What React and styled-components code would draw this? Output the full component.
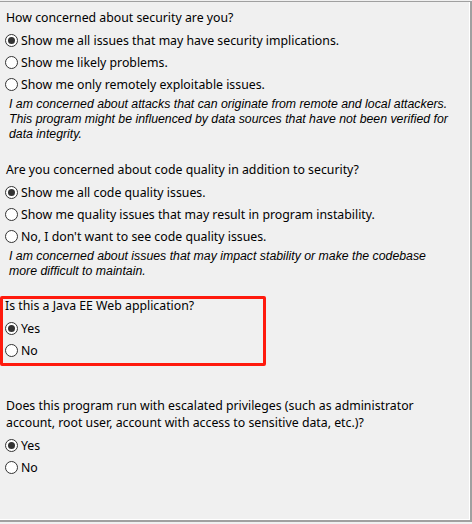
import React from 'react'
import styled, { createGlobalStyle } from 'styled-components'

const sections = [
  {
    question: 'How concerned about security are you?',
    options: [
      'Show me all issues that may have security implications.',
      'Show me likely problems.',
      'Show me only remotely exploitable issues.',
    ],
    note: 'I am concerned about attacks that can originate from remote and local attackers. This program might be influenced by data sources that have not been verified for data integrity.',
  },
  {
    question: 'Are you concerned about code quality in addition to security?',
    options: [
      'Show me all code quality issues.',
      'Show me quality issues that may result in program instability.',
      "No, I don't want to see code quality issues.",
    ],
    note: 'I am concerned about issues that may impact stability or make the codebase more difficult to maintain.',
  },
]

const Radio = ({ checked, label }) => (
  <Option>
    <Circle checked={checked} />
    <span>{label}</span>
  </Option>
)

const App = () => {
  return (
    <Panel>
      {sections.map((s, i) => (
        <Section key={i}>
          <Question>{s.question}</Question>
          {s.options.map((o, j) => (
            <Radio key={j} checked={j === 0} label={o} />
          ))}
          <Note>{s.note}</Note>
        </Section>
      ))}

      <Highlight>
        <Question tight>Is this a Java EE Web application?</Question>
        <Radio checked label="Yes" />
        <Radio label="No" />
      </Highlight>

      <Section>
        <Question wrap>
          Does this program run with escalated privileges (such as administrator
          account, root user, account with access to sensitive data, etc.)?
        </Question>
        <Radio checked label="Yes" />
        <Radio label="No" />
      </Section>

      <GlobalStyle />
    </Panel>
  )
}

const GlobalStyle = createGlobalStyle`
  * {
    box-sizing: border-box;
  }
  html,
  body {
    margin: 0;
    padding: 0;
    background: #f0f0f0;
    width: 472px;
    height: 524px;
    overflow: hidden;
  }
`

const Panel = styled.div`
  margin-top: 1px;
  margin-left: -2px;
  width: 474px;
  height: 521px;
  border-top: 1px solid #a0a0a0;
  border-right: 2px solid #a0a0a0;
  border-bottom: 2px solid #a0a0a0;
  box-shadow: inset -1px -1px 0 #ffffff;
  background: #f0f0f0;
  padding: 5px 0 0 8px;
  font-family: 'Noto Sans', sans-serif;
  font-size: 12.3px;
  color: #000;
`
const Section = styled.div`
  display: flex;
  flex-direction: column;
  margin-bottom: 17px;
`
const Question = styled.div`
  line-height: ${p => (p.wrap ? '17px' : p.tight ? '14px' : '22px')};
  white-space: ${p => (p.wrap ? 'normal' : 'nowrap')};
  width: ${p => (p.wrap ? '440px' : 'auto')};
  margin-bottom: ${p => (p.wrap ? '3px' : p.tight ? '4px' : '0')};
`
const Option = styled.label`
  display: flex;
  align-items: center;
  gap: 3px;
  height: 22px;
  margin-left: -1px;
  white-space: nowrap;
`
const Circle = styled.span`
  width: 13px;
  height: 13px;
  border-radius: 50%;
  border: 1px solid #333;
  background: #fff;
  display: flex;
  align-items: center;
  justify-content: center;
  flex-shrink: 0;
  &::after {
    content: '';
    display: ${p => (p.checked ? 'block' : 'none')};
    width: 7px;
    height: 7px;
    border-radius: 50%;
    background: #333;
  }
`
const Note = styled.div`
  font-family: 'Liberation Sans', Arial, sans-serif;
  font-style: italic;
  font-size: 12.3px;
  line-height: 15px;
  padding: 2px 0 0 3px;
  width: 446px;
`
const Highlight = styled.div`
  margin: 1px 0 31px -6px;
  padding: 0 0 2px 2px;
  width: 266px;
  border: 3px solid #ff1a0d;
  border-radius: 2px;
  display: flex;
  flex-direction: column;
  & > label {
    margin-left: 0;
  }
`

export default App
